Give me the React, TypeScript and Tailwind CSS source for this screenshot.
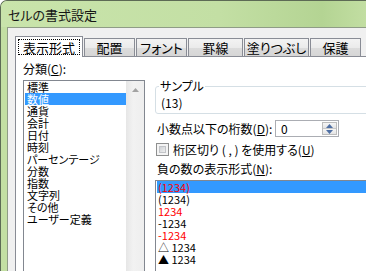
import React from "react";

const tabs = [
  { label: "表示形式", width: "w-[68px]", active: true },
  { label: "配置", width: "w-[51px]" },
  { label: "フォント", width: "w-[51px]" },
  { label: "罫線", width: "w-[55px]" },
  { label: "塗りつぶし", width: "w-[65px]" },
  { label: "保護", width: "w-[51px]" },
];

const categories = [
  "標準",
  "数値",
  "通貨",
  "会計",
  "日付",
  "時刻",
  "パーセンテージ",
  "分数",
  "指数",
  "文字列",
  "その他",
  "ユーザー定義",
];

const negatives = [
  { label: "(1234)", red: true },
  { label: "(1234)", red: false },
  { label: "1234", red: true },
  { label: "-1234", red: false },
  { label: "-1234", red: true },
  { label: "△ 1234", red: false },
  { label: "▲ 1234", red: false },
];

const Arrow = ({ up, color }: { up: boolean; color: string }) => (
  <svg width="7" height="4" viewBox="0 0 7 4">
    <path d={up ? "M0 4 L3.5 0 L7 4 Z" : "M0 0 L3.5 4 L7 0 Z"} fill={color} />
  </svg>
);

export default function App() {
  return (
    <div className="w-[366px] h-[271px] overflow-hidden flex flex-col rounded-tl-[7px] border-l border-t border-[#5d6b55] bg-[#c3dfa3] text-black font-['Noto_Sans_CJK_JP',sans-serif] [font-feature-settings:'palt']">
      {/* title bar */}
      <div className="h-[26px] shrink-0 flex items-center pl-[7px] bg-[linear-gradient(90deg,#c9e4ab_0%,#c3dfa4_60%,#b4d493_88%,#c2dea2_100%)] text-[13px] leading-[13px] text-[#161616]">
        セルの書式設定
      </div>

      {/* client area */}
      <div className="flex-1 ml-[6px] border-l border-t border-[#8f9c86] bg-[#f0f0f0] pl-[7px] pt-[8px] flex flex-col">
        {/* tabs */}
        <div className="flex items-end h-[20px] shrink-0">
          {tabs.map((t) =>
            t.active ? (
              <div
                key={t.label}
                className={`${t.width} h-[21px] -mb-px relative z-10 flex items-center justify-center bg-white border-l border-t border-r border-[#898c95] text-[13px] leading-[13px]`}
              >
                <span className="border border-dotted border-black px-[4px] pt-[1px]">
                  {t.label}
                </span>
              </div>
            ) : (
              <div
                key={t.label}
                className={`${t.width} h-[18px] ml-[1px] flex items-center justify-center bg-[linear-gradient(180deg,#f3f3f3_0%,#ebebeb_50%,#dcdcdc_51%,#d6d6d6_100%)] border-l border-t border-r border-[#898c95] text-[13px] leading-[13px]`}
              >
                {t.label}
              </div>
            ),
          )}
        </div>

        {/* panel */}
        <div className="flex-1 flex border-l border-t border-[#898c95] bg-white pt-[6px] pl-[7px] text-[12px] leading-[12px]">
          {/* category column */}
          <div className="flex flex-col shrink-0">
            <div className="h-[12px]">
              分類(<u>C</u>):
            </div>
            <div className="mt-[5px] w-[122px] h-[200px] flex border border-[#828790] bg-white">
              <div className="flex-1 pl-[1px] flex flex-col text-[11px]">
                {categories.map((c, i) => (
                  <div
                    key={c}
                    className={`h-[12px] leading-[12px] pl-[2px] whitespace-nowrap ${
                      i === 1 ? "bg-[#3399ff] text-white" : ""
                    }`}
                  >
                    {c}
                  </div>
                ))}
              </div>
              <div className="w-[18px] bg-[linear-gradient(90deg,#e6e6e6,#f2f2f2_40%,#eeeeee)] flex justify-center pt-[7px]">
                <Arrow up color="#a3a3a3" />
              </div>
            </div>
          </div>

          {/* format options */}
          <div className="ml-[10px] w-[240px] shrink-0 pt-[17px] flex flex-col">
            <fieldset className="border border-[#d5dfe5] rounded-[3px] pl-[3px] pb-[4px]">
              <legend className="px-[1px] leading-[12px]">サンプル</legend>
              <div className="mt-[5px] ml-[2px] h-[12px]">(13)</div>
            </fieldset>

            <div className="mt-[6px] flex items-center">
              <div className="w-[120px] pl-[2px] whitespace-nowrap">
                小数点以下の桁数(<u>D</u>):
              </div>
              <div className="w-[64px] h-[17px] flex border border-[#abadb3] bg-white">
                <div className="flex-1 pl-[5px] flex items-center">0</div>
                <div className="w-[15px] flex flex-col my-[1px] mr-[1px] border border-[#bcbcbc]">
                  <div className="flex-1 flex items-center justify-center border-b border-[#c8c8c8] bg-[linear-gradient(180deg,#f6f6f6,#e4e4e4)]">
                    <Arrow up color="#4f6fa3" />
                  </div>
                  <div className="flex-1 flex items-center justify-center bg-[linear-gradient(180deg,#f6f6f6,#e4e4e4)]">
                    <Arrow up={false} color="#4f6fa3" />
                  </div>
                </div>
              </div>
            </div>

            <div className="mt-[6px] flex items-center pl-[1px]">
              <div className="w-[13px] h-[13px] border border-[#8e8f8f] bg-[#f4f4f4] p-[2px]">
                <div className="w-full h-full border border-[#c2c4c8] bg-[linear-gradient(135deg,#cfd2d6,#eeeeee)]" />
              </div>
              <div className="ml-[4px] whitespace-nowrap">
                桁区切り ( , ) を使用する(<u>U</u>)
              </div>
            </div>

            <div className="mt-[7px] pl-[2px] h-[12px] whitespace-nowrap">
              負の数の表示形式(<u>N</u>):
            </div>

            <div className="mt-[5px] h-[120px] border border-[#828790] pl-[1px] flex flex-col text-[11px]">
              {negatives.map((n, i) => (
                <div
                  key={i}
                  className={`h-[12px] leading-[12px] pl-[1px] whitespace-nowrap ${
                    i === 0 ? "bg-[#3399ff]" : ""
                  } ${n.red ? "text-[#ff0000]" : "text-black"}`}
                >
                  {n.label}
                </div>
              ))}
            </div>
          </div>
        </div>
      </div>
    </div>
  );
}
